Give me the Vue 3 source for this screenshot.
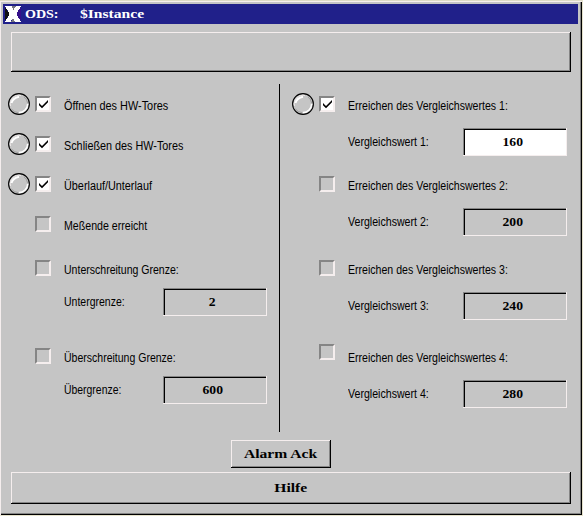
<script setup>
const left = [
  { label: 'Öffnen des HW-Tores', scale: 0.907, lamp: true, checked: true },
  { label: 'Schließen des HW-Tores', scale: 0.901, lamp: true, checked: true },
  { label: 'Überlauf/Unterlauf', scale: 0.903, lamp: true, checked: true },
  { label: 'Meßende erreicht', scale: 0.885 },
  { label: 'Unterschreitung Grenze:', scale: 0.878, field: 'Untergrenze:', fieldScale: 0.875, value: '2' },
  { label: 'Überschreitung Grenze:', scale: 0.876, field: 'Übergrenze:', fieldScale: 0.868, value: '600' },
]
const right = [
  { label: 'Erreichen des Vergleichswertes 1:', lamp: true, checked: true, field: 'Vergleichswert 1:', value: '160', active: true },
  { label: 'Erreichen des Vergleichswertes 2:', field: 'Vergleichswert 2:', value: '200' },
  { label: 'Erreichen des Vergleichswertes 3:', field: 'Vergleichswert 3:', value: '240' },
  { label: 'Erreichen des Vergleichswertes 4:', field: 'Vergleichswert 4:', value: '280' },
].map((item) => ({ ...item, scale: 0.881, fieldScale: 0.884 }))
const columns = [
  { name: 'left', items: left },
  { name: 'right', items: right },
]
const stretch = (factor) => ({ transform: `scaleX(${factor})` })
</script>

<template>
  <main class="window">
    <header class="titlebar">
      <svg class="logo" width="16" height="16" viewBox="0 0 16 16" shape-rendering="crispEdges">
        <path d="M0 1L5 8L0 15Z" fill="#101014" />
        <path d="M16 1L11 8L16 15Z" fill="#35108a" />
        <path d="M6 0H11L8 5ZM8 11L11 16H6Z" fill="#77777d" />
        <path d="M0 0H6.500L8.500 4L11 0H16L11.500 8L16 16H10L8 12L5.500 16H0L4.500 8Z" fill="#fff" />
      </svg>
      <span class="serif name">ODS:</span>
      <span class="serif">$Instance</span>
    </header>
    <div class="raised message"></div>
    <div class="body">
      <section v-for="col in columns" :key="col.name" :class="['column', col.name]">
        <div v-for="item in col.items" :key="item.label" class="item">
          <div class="row">
            <span class="lamp-slot">
              <svg v-if="item.lamp" width="22" height="22" viewBox="0 0 22 22">
                <circle cx="11" cy="11" r="10.400" fill="#c5c5c5" stroke="#000" stroke-width="1.100" />
                <path d="M2.500 13A8.700 8.700 0 0 1 13 2.500" fill="none" stroke="#eee9e9" stroke-width="1" />
                <path d="M3.500 10Q5 5 11 3.800" fill="none" stroke="#fff" stroke-width="1.900" />
                <path d="M11 19.600A8.700 8.700 0 0 0 19.600 11" fill="none" stroke="#fff" stroke-width="1.500" />
                <path d="M3.500 16A8.700 8.700 0 0 0 10 19.600M16 4A8.700 8.700 0 0 1 19.600 10" fill="none" stroke="#959595" stroke-width="0.800" />
              </svg>
            </span>
            <span :class="['check', { on: item.checked }]">
              <svg v-if="item.checked" width="12" height="12" viewBox="0 0 12 12">
                <path d="M2 5L5 8L11 2V4.300L5 10.300L2 7.300Z" fill="#000" />
              </svg>
            </span>
            <span class="label" :style="stretch(item.scale)">{{ item.label }}</span>
          </div>
          <div v-if="item.field" class="value-row">
            <span class="label-slot"><span class="label" :style="stretch(item.fieldScale)">{{ item.field }}</span></span>
            <span :class="['field', { active: item.active }]"><span class="serif">{{ item.value }}</span></span>
          </div>
        </div>
      </section>
    </div>
    <button class="raised ack"><span class="serif">Alarm Ack</span></button>
    <button class="raised help"><span class="serif">Hilfe</span></button>
  </main>
</template>

<style>
body { margin: 0; background: #e6e3cc; }
</style>

<style scoped>
* { box-sizing: border-box; }
.window {
  width: 582px;
  height: 515px;
  border-top: 1px solid #dedbc6;
  background: #c5c5c5;
  box-shadow: inset 1px 1px #f5eeee, inset -1px -1px #000, inset -2px -2px #858585;
  padding: 3px 4px 0 3px;
  display: flex;
  flex-direction: column;
}
.titlebar {
  height: 20px;
  width: 575px;
  background: #20208a;
  color: #fff;
  display: flex;
  align-items: center;
  padding-left: 2px;
}
.name { width: 55px; margin-left: 4px; }
.serif {
  font: bold 13px/16px "Liberation Serif", serif;
  display: inline-block;
  white-space: nowrap;
  transform: scaleX(1.2);
  transform-origin: left center;
}
.titlebar .name { transform: scaleX(1.08); }
.raised {
  border: 0;
  padding: 0;
  background: #c5c5c5;
  box-shadow: inset -1px -1px #000, inset 1px 1px #f5eeee, inset -2px -2px #858585;
  color: #000;
  display: flex;
  align-items: center;
  justify-content: center;
}
.raised .serif { transform-origin: center; margin-right: 1px; }
.message { width: 560px; height: 40px; margin: 8px 0 0 8px; }
.body { display: flex; height: 348px; margin-top: 12px; }
.column { width: 277px; padding-left: 5px; }
.column.left { border-right: 1px solid #000; }
.column.right { width: 296px; padding-left: 12px; }
.row { height: 40px; display: flex; align-items: center; }
.lamp-slot { width: 22px; height: 22px; flex: none; margin-right: 5px; }
.check {
  width: 16px;
  height: 16px;
  flex: none;
  margin-right: 13px;
  border: 2px solid;
  border-color: #858585 #f5eeee #f5eeee #858585;
}
.check.on { background: #fff; }
.check svg { display: block; }
.label {
  font: 12px/16px "Liberation Sans", Arial, sans-serif;
  color: #000;
  white-space: nowrap;
  display: inline-block;
  transform-origin: left center;
  padding-top: 3px;
}
.value-row { height: 28px; display: flex; align-items: center; padding-left: 56px; }
.value-row .label { padding-top: 0; display: block; }
.label-slot { width: 99px; flex: none; }
.right .label-slot { width: 115px; }
.field {
  width: 104px;
  height: 28px;
  flex: none;
  display: flex;
  align-items: center;
  justify-content: center;
  padding-right: 5px;
  box-shadow: inset -1px -1px #f5eeee, inset 1px 1px #858585, inset 2px 2px #000;
}
.field.active { background: #fff; }
.field .serif { transform: scaleX(1.05); transform-origin: center; }
.left .item:nth-child(5) { margin-top: 4px; }
.left .item:nth-child(6) { margin-top: 20px; }
.right .value-row { margin-top: 4px; }
.right .item + .item { margin-top: 8px; }
.right .item:nth-child(3) { margin-top: 12px; }
.right .item:nth-child(4) { margin-top: 16px; }
.right .item:nth-child(4) .check { margin-bottom: 8px; }
.ack { width: 100px; height: 28px; margin: 8px 0 0 228px; }
.help { width: 560px; height: 32px; margin: 4px 0 0 8px; }
</style>
